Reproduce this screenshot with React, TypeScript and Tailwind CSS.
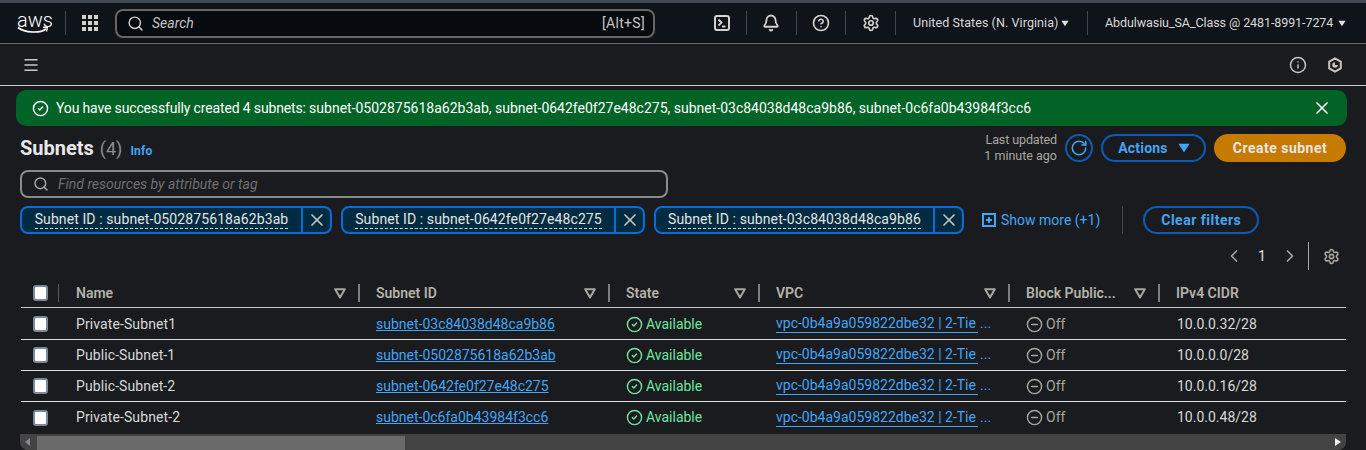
import React from "react";
import { Bell, CircleCheck, CircleHelp, CircleMinus, ChevronLeft, ChevronRight, Info, Menu, RotateCw, Search, Settings, X } from "lucide-react";

function Sep({ className = "" }: { className?: string }) {
  return <div className={"w-px bg-[#414750] " + className} />;
}

function Caret({ className = "", w = 10, h = 8 }: { className?: string; w?: number; h?: number }) {
  return (
    <svg width={w} height={h} viewBox="0 0 10 8" className={className}>
      <path d="M0.5 0.5h9L5 7.5z" fill="currentColor" />
    </svg>
  );
}

function SortIcon() {
  return (
    <svg width="12" height="11" viewBox="0 0 12 11" className="text-[#a8a69e]">
      <path d="M1.2 1.2h9.6L6 9.4z" fill="none" stroke="currentColor" strokeWidth="2" strokeLinejoin="round" />
    </svg>
  );
}

function Chip({ text, width }: { text: string; width: string }) {
  return (
    <div className={"flex h-[28px] items-stretch rounded-lg border-2 border-[#0a6cd8] bg-[#002b40] " + width}>
      <div className="flex flex-1 items-center justify-center">
        <span className="border-b border-dashed border-[#d8d8d8] leading-[17px] tracking-[0.1px] text-[#e4e4e4]">{text}</span>
      </div>
      <div className="flex w-[29px] items-center justify-center border-l-2 border-[#0a6cd8]">
        <X size={20} strokeWidth={2} className="text-[#c6c6c0]" />
      </div>
    </div>
  );
}

const rowGrid = "grid grid-cols-[39px_300px_250px_150px_250px_150px_186px]";

const rows = [
  ["Private-Subnet1", "subnet-03c84038d48ca9b86", "10.0.0.32/28", "h-[32px] pt-[1px]"],
  ["Public-Subnet-1", "subnet-0502875618a62b3ab", "10.0.0.0/28", "h-[31px]"],
  ["Public-Subnet-2", "subnet-0642fe0f27e48c275", "10.0.0.16/28", "h-[31px]"],
  ["Private-Subnet-2", "subnet-0c6fa0b43984f3cc6", "10.0.0.48/28", "h-[32px] pb-[1px]"],
];

function Box() {
  return <div className="h-[16px] w-[15px] rounded-[3px] border-2 border-[#7d8998] bg-white" />;
}

function Head({ label, sort = true, last = false }: { label: string; sort?: boolean; last?: boolean }) {
  return (
    <div className="relative flex items-center justify-between pl-[16px] pr-[14px] font-semibold text-[#b4b2aa]">
      <span>{label}</span>
      {sort && <SortIcon />}
      {!last && <div className="absolute right-0 top-[2px] h-[18px] w-[2px] bg-[#7e7e7e]" />}
    </div>
  );
}

export default function App() {
  return (
    <div className="h-[450px] w-[1366px] overflow-hidden bg-[#1a1b1e] text-[14px] text-[#d5dbdb] font-['Roboto','Noto_Sans',sans-serif]">
      <div className="h-[3px] bg-[#414750]" />
      <header className="flex h-[40px] items-center bg-[#0f141a] pl-[17px] text-[#d1d5db]">
        <div className="relative h-[28px] w-[32px]">
          <span className="block text-center text-[20px] font-light leading-[22px] text-white">aws</span>
          <svg width="32" height="10" viewBox="0 0 32 10" className="absolute left-0 top-[17px]">
            <path d="M1 1.5C8 7 23 7.5 29 3" fill="none" stroke="white" strokeWidth="1.6" />
            <path d="M26 1.5l4.5-.5-1 4.5" fill="none" stroke="white" strokeWidth="1.3" />
          </svg>
        </div>
        <Sep className="ml-[16px] h-[24px]" />
        <svg width="16" height="16" viewBox="0 0 16 16" className="ml-[16px] text-[#d4d2ca]">
          {[0, 6, 12].flatMap((x) => [0, 6, 12].map((y) => <rect key={x + "-" + y} x={x} y={y} width="4" height="4" fill="currentColor" />))}
        </svg>
        <div className="ml-[17px] flex h-[29px] w-[540px] items-center rounded-lg border-2 border-[#6b655c] bg-[#070a0e] pl-[10px] pr-[8px]">
          <Search size={17} strokeWidth={2} className="text-[#d0d0d0]" />
          <span className="ml-[8px] flex-1 text-[14px] italic text-[#c4c4c4]">Search</span>
          <span className="text-[14px] tracking-[0.3px] text-[#c4c4c4]">[Alt+S]</span>
        </div>
        <div className="ml-[59px] flex h-[24px] w-[16px] items-center">
          <svg width="16" height="16" viewBox="0 0 16 16" className="text-[#d4d2ca]">
            <rect x="1" y="1" width="14" height="14" rx="2" fill="none" stroke="currentColor" strokeWidth="2" />
            <path d="M4.5 4.5l3 3-3 3M8 11.5h3.5" fill="none" stroke="currentColor" strokeWidth="1.8" />
          </svg>
        </div>
        <Sep className="ml-[16px] h-[24px]" />
        <Bell size={18} strokeWidth={2.4} className="ml-[15px] text-[#d4d2ca]" />
        <Sep className="ml-[16px] h-[24px]" />
        <CircleHelp size={18} strokeWidth={2.2} className="ml-[15px] text-[#d4d2ca]" />
        <Sep className="ml-[15px] h-[24px]" />
        <Settings size={18} strokeWidth={2.2} className="ml-[16px] text-[#d4d2ca]" />
        <Sep className="ml-[15px] h-[24px]" />
        <span className="ml-[17px] w-[145px] whitespace-nowrap text-[12.5px] tracking-[0.08px] text-[#d8d8d8]">United States (N. Virginia)</span>
        <Caret w={8} h={7} className="ml-[3px] text-[#e0e0e0]" />
        <Sep className="ml-[18px] h-[24px]" />
        <span className="ml-[17px] w-[229px] whitespace-nowrap text-[12.5px] tracking-[-0.08px] text-[#d8d8d8]">Abdulwasiu_SA_Class @ 2481-8991-7274</span>
        <Caret w={8} h={7} className="ml-[4px] text-[#e0e0e0]" />
      </header>
      <div className="h-px bg-[#6a6a68]" />
      <div className="flex h-[41px] items-center justify-between pl-[22px] pr-[23px]">
        <Menu size={18} strokeWidth={2} className="text-[#c8c8c8]" />
        <div className="flex items-center gap-[20px] text-[#c8c6be]">
          <Info size={18} strokeWidth={2} />
          <svg width="16" height="16" viewBox="0 0 16 16">
            <path d="M8 1.3l5.8 3.3v6.8L8 14.7l-5.8-3.3V4.6z" fill="none" stroke="currentColor" strokeWidth="2" strokeLinejoin="round" />
            <path d="M8 5.2a2.8 2.8 0 1 0 2.8 2.8H8z" fill="currentColor" />
          </svg>
        </div>
      </div>
      <div className="h-px bg-[#cfcfcf]" />
      <main className="px-[16px] pt-[4px]">
        <div className="flex h-[36px] w-[1331px] items-center rounded-[10px] bg-[#016325] pl-[16px] pr-[15px] text-white">
          <CircleCheck size={17} strokeWidth={2} />
          <span className="ml-[7px] flex-1">
            <span className="tracking-[-0.15px]">You have successfully created 4 subnets: </span>
            subnet-0502875618a62b3ab, subnet-0642fe0f27e48c275, subnet-03c84038d48ca9b86, subnet-0c6fa0b43984f3cc6
          </span>
          <X size={20} strokeWidth={2} />
        </div>
        <div className="mt-[8px] flex h-[28px] items-center justify-between pl-[4px] pr-[4px]">
          <div className="flex items-baseline">
            <span className="text-[20px] font-bold leading-[24px] text-[#e8e8e8]">Subnets</span>
            <span className="ml-[6px] text-[18px] leading-[24px] text-[#8d8d94]">(4)</span>
            <span className="ml-[8px] text-[12px] font-bold tracking-[0.2px] text-[#42a5f5]">Info</span>
          </div>
          <div className="flex items-center">
            <div className="mr-[8px] text-right text-[12.5px] leading-[16px] text-[#a8a8a0]">
              <div className="tracking-[-0.1px]">Last updated</div>
              <div>1 minute ago</div>
            </div>
            <div className="flex h-[28px] w-[28px] items-center justify-center rounded-full border-2 border-[#0a5cb8] text-[#42a5f5]">
              <RotateCw size={18} strokeWidth={2} />
            </div>
            <div className="ml-[8px] flex h-[28px] w-[105px] items-center justify-center gap-[11px] rounded-full border-2 border-[#0a5cb8] font-bold tracking-[0.2px] text-[#42a5f5]">
              <span>Actions</span>
              <Caret className="scale-125" />
            </div>
            <div className="ml-[8px] flex h-[28px] w-[132px] items-center justify-center rounded-full bg-[#c67a00] font-bold tracking-[0.5px] text-[#e6e6e6]">Create subnet</div>
          </div>
        </div>
        <div className="ml-[4px] mt-[8px] flex h-[28px] w-[648px] items-center rounded-lg border-2 border-[#8a8a8a] pl-[11px]">
          <Search size={16} strokeWidth={2.2} className="text-[#a8a8a8]" />
          <span className="ml-[9px] text-[14px] italic text-[#6f6f6f]">Find resources by attribute or tag</span>
        </div>
        <div className="ml-[4px] mt-[8px] flex h-[28px] items-center">
          <Chip text="Subnet ID : subnet-0502875618a62b3ab" width="w-[312px]" />
          <div className="w-[9px]" />
          <Chip text="Subnet ID : subnet-0642fe0f27e48c275" width="w-[304px]" />
          <div className="w-[9px]" />
          <Chip text="Subnet ID : subnet-03c84038d48ca9b86" width="w-[310px]" />
          <div className="ml-[18px] flex items-center gap-[5px] text-[#42a5f5]">
            <svg width="14" height="14" viewBox="0 0 14 14">
              <rect x="1" y="1" width="12" height="12" fill="none" stroke="currentColor" strokeWidth="2" />
              <path d="M4 7h6M7 4v6" stroke="currentColor" strokeWidth="2" />
            </svg>
            <span>Show more (+1)</span>
          </div>
          <Sep className="ml-[22px] h-[28px]" />
          <div className="ml-[20px] flex h-[28px] w-[116px] items-center justify-center rounded-full border-2 border-[#0a5cb8] font-bold tracking-[0.5px] text-[#42a5f5]">Clear filters</div>
        </div>
        <div className="mt-[7px] flex h-[30px] items-center justify-end pr-[10px] text-[#c8c8c8]">
          <ChevronLeft size={20} strokeWidth={2} className="text-[#a8a69e]" />
          <span className="ml-[10px] w-[16px] text-center text-[#e0e0e0]">1</span>
          <ChevronRight size={20} strokeWidth={2} className="ml-[10px] text-[#a8a69e]" />
          <div className="ml-[8px] h-[28px] w-px bg-[#a8a8a8]" />
          <Settings size={17} strokeWidth={2.2} className="ml-[14px] text-[#a8a69e]" />
        </div>
        <div className="ml-[5px] mt-[11px] w-[1325px]">
          <div className={rowGrid + " h-[26px] border-b border-[#c8c8c8] pb-[3px]"}>
            <div className="relative flex items-center pl-[12px]">
              <Box />
              <div className="absolute right-[1px] top-[2px] h-[18px] w-px bg-[#5a5a5a]" />
            </div>
            <Head label="Name" />
            <Head label="Subnet ID" />
            <Head label="State" />
            <Head label="VPC" />
            <Head label="Block Public..." />
            <Head label="IPv4 CIDR" sort={false} last />
          </div>
          {rows.map((r, i) => (
            <div key={r[0]} className={rowGrid + " items-center " + r[3] + " " + (i < 3 ? "border-b border-[#e0e0e0]" : "")}>
              <div className="pl-[12px]"><Box /></div>
              <div className="pl-[16px] tracking-[0.1px] text-[#d8d8d8]">{r[0]}</div>
              <div className="pl-[16px] text-[#42a5f5] underline">{r[1]}</div>
              <div className="flex items-center gap-[3px] pl-[16px] text-[#6fe5a0]">
                <CircleCheck size={17} strokeWidth={2} />
                <span>Available</span>
              </div>
              <div className="flex pl-[16px] text-[#42a5f5]">
                <span className="w-[202px] overflow-hidden whitespace-nowrap border-b border-[#42a5f5] leading-[17px]">vpc-0b4a9a059822dbe32 | 2-Tie</span>
                <span className="ml-[2px] leading-[17px]">...</span>
              </div>
              <div className="flex items-center gap-[3px] pl-[16px] text-[#a8a69e]">
                <CircleMinus size={17} strokeWidth={2} />
                <span>Off</span>
              </div>
              <div className="pl-[17px] text-[#d8d8d8]">{r[2]}</div>
            </div>
          ))}
          <div className="relative -ml-px h-[16px] w-[1326px] rounded-bl-[8px] rounded-br-[8px] bg-[#434343] pt-[2px]">
            <svg width="6" height="8" viewBox="0 0 6 8" className="absolute left-[5px] top-[4px]"><path d="M5 0v8L0 4z" fill="#8a8a8a" /></svg>
            <div className="ml-[17px] h-[14px] w-[368px] bg-[#6a6a6a]" />
            <svg width="6" height="8" viewBox="0 0 6 8" className="absolute right-[5px] top-[4px]"><path d="M0 0v8l6-4z" fill="#f0f0f0" /></svg>
          </div>
        </div>
      </main>
    </div>
  );
}
